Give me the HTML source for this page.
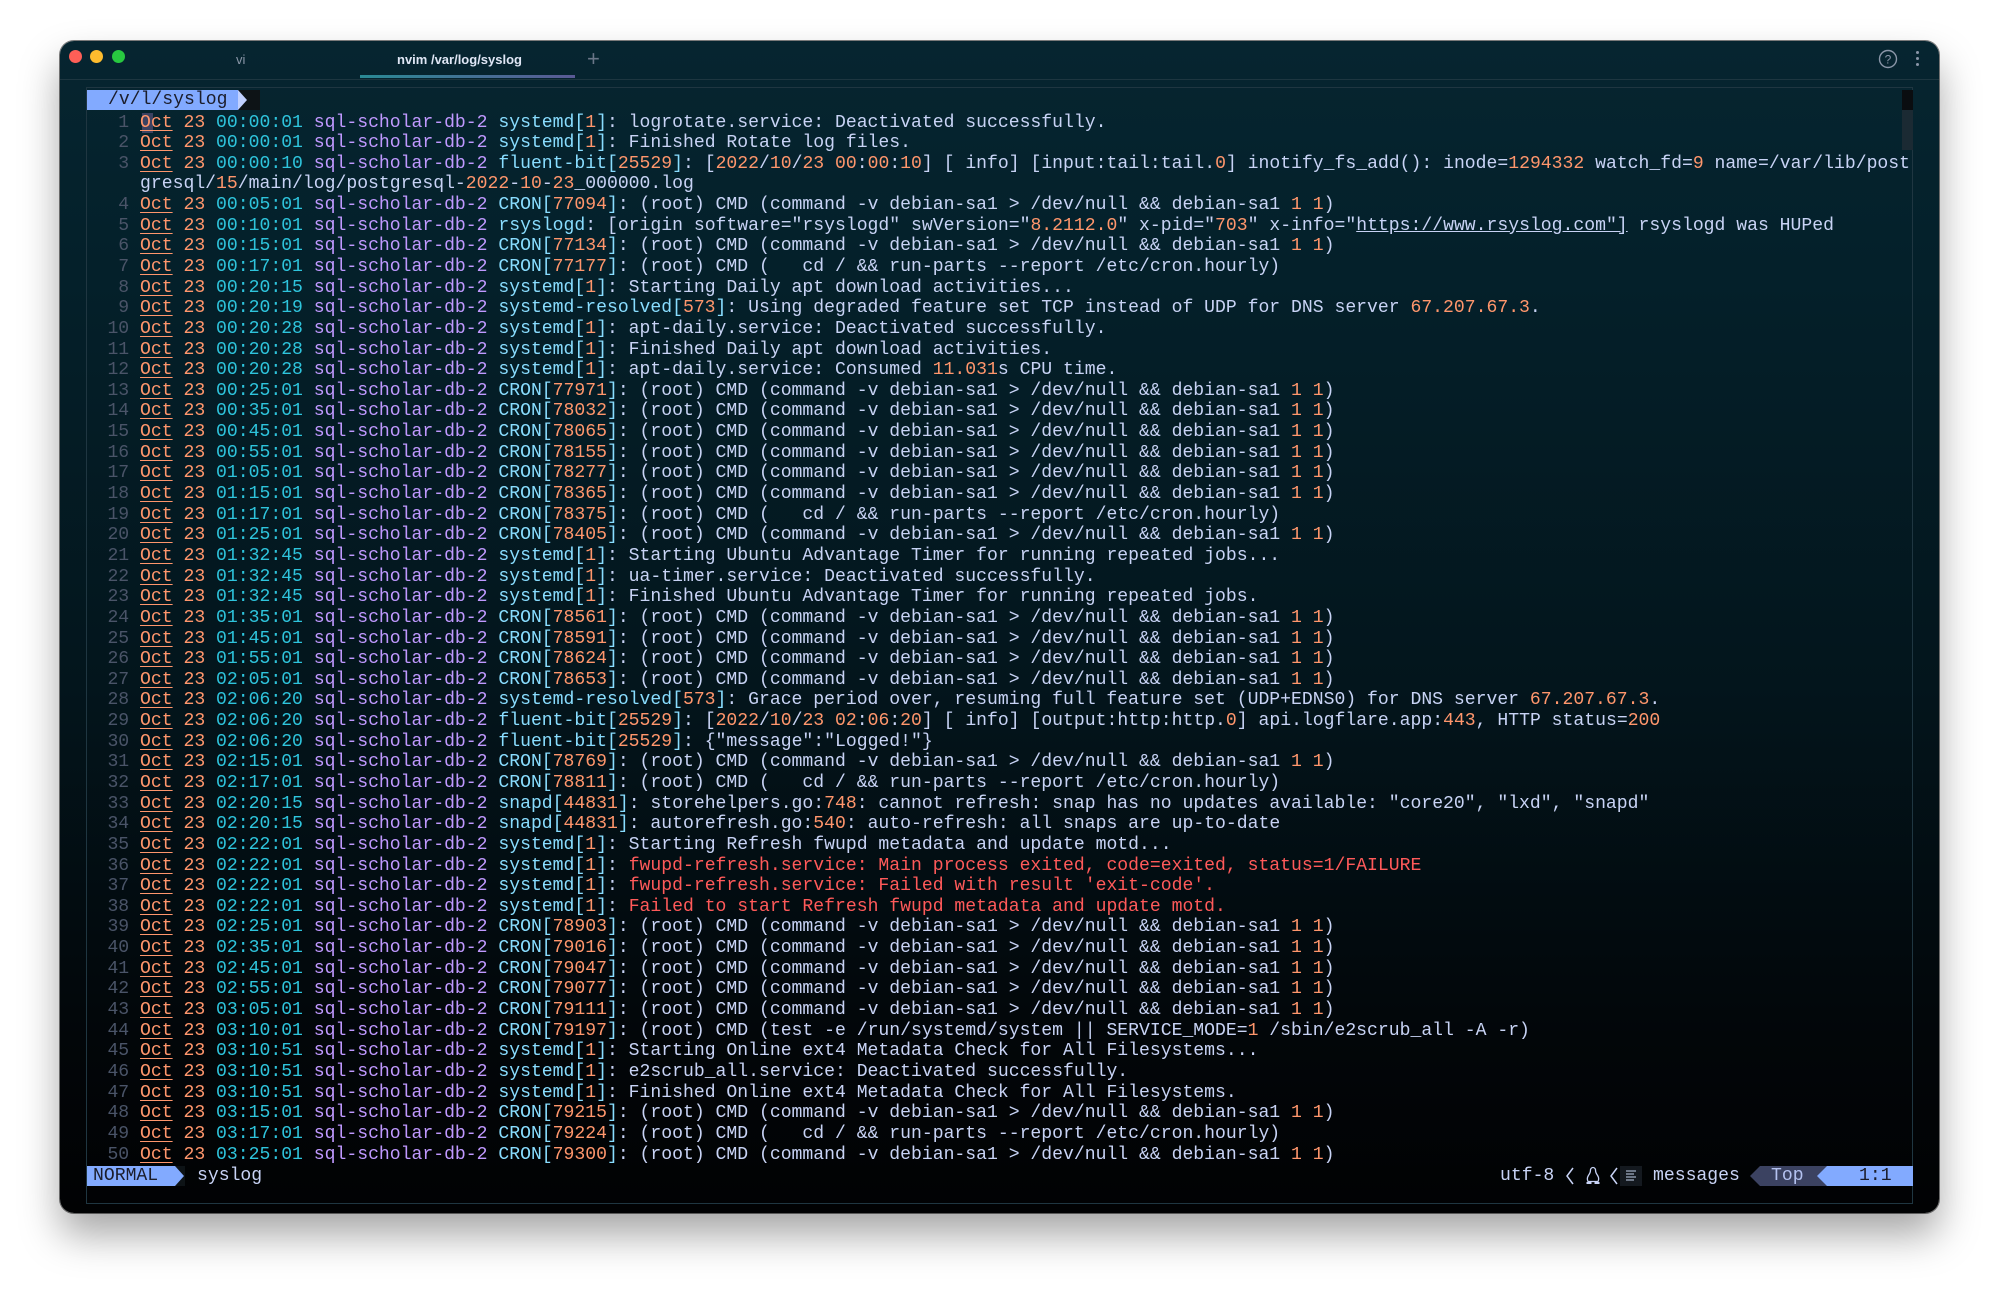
<!DOCTYPE html>
<html><head><meta charset="utf-8"><style>
html,body{margin:0;padding:0;width:2000px;height:1295px;background:#fff;overflow:hidden}
.win{position:absolute;left:60px;top:41px;width:1879px;height:1172px;border-radius:14px;
background:linear-gradient(180deg,#062530 0%,#04202a 20%,#03151c 55%,#020609 85%,#010203 100%);
box-shadow:0 22px 40px rgba(0,0,0,.35),0 0 0 1px rgba(0,0,0,.5);overflow:hidden}
.tl{position:absolute;top:9px;width:13px;height:13px;border-radius:50%}
.title{position:absolute;left:0;top:0;width:100%;height:38px;border-bottom:1px solid #1d3640;font-family:"Liberation Sans",sans-serif;font-size:13px;color:#c8d3f5}
.pane{position:absolute;left:26px;top:46px;width:1827px;height:1117px;border:1px solid #1f3641;box-sizing:border-box}
pre{position:absolute;left:36.6px;top:71.5px;margin:0;font-family:"Liberation Mono",monospace;font-size:18.1px;line-height:20.64px;color:#c8d3f5;white-space:pre}
n{color:#4a5468}u{color:#ff966c;text-decoration:underline;text-underline-offset:3px}
o{color:#ff966c}t{color:#2ec4dc}h{color:#c099ff}k{color:#89ddff}r{color:#ff5a5a}
.st{position:absolute;font-family:"Liberation Mono",monospace;font-size:18.1px;line-height:20.64px;color:#c8d3f5;white-space:pre}
</style></head><body>
<div class="win">
 <div class="title">
  <div class="tl" style="left:9px;background:#fe5f57"></div>
  <div class="tl" style="left:30px;background:#febc2e"></div>
  <div class="tl" style="left:52px;background:#28c840"></div>
  <div style="position:absolute;left:176px;top:11px;color:#8a96a8">vi</div>
  <div style="position:absolute;left:337px;top:11px;font-weight:bold;color:#dfe6f5">nvim /var/log/syslog</div>
  <div style="position:absolute;left:300px;top:34px;width:215px;height:3px;background:linear-gradient(90deg,#2a8a95,#5a5a95)"></div>
  <div style="position:absolute;left:527px;top:5px;font-size:22px;color:#6a7688">+</div>
  <svg style="position:absolute;left:1818px;top:8px" width="20" height="20" viewBox="0 0 20 20"><circle cx="10" cy="10" r="8.5" fill="none" stroke="#8a96a8" stroke-width="1.4"/><text x="10" y="14.5" text-anchor="middle" font-family="Liberation Sans" font-size="12" fill="#8a96a8">?</text></svg>
  <div style="position:absolute;left:1856px;top:10px;width:3px;height:3px;background:#8a96a8;border-radius:50%;box-shadow:0 6px 0 #8a96a8,0 12px 0 #8a96a8"></div>
 </div>
 <div class="pane"></div>
 <div style="position:absolute;left:1842px;top:49px;width:11px;height:20px;background:#0a0d10"></div>
 <div style="position:absolute;left:1842px;top:69px;width:11px;height:40px;background:#1b2a33"></div>
 <div style="position:absolute;left:27px;top:49px;width:151px;height:20px;background:#82aaff"></div>
 <div style="position:absolute;left:178px;top:49px;width:22px;height:20px;background:#0d1316"></div>
 <div style="position:absolute;left:178px;top:49px;width:0;height:0;border-left:9px solid #c0d0ff;border-top:10px solid transparent;border-bottom:10px solid transparent"></div>
 <div class="st" style="left:48px;top:49px;color:#1b1d2b">/v/l/syslog</div>
 <div style="position:absolute;left:82px;top:72px;width:11px;height:20px;background:#3b4261"></div>
<pre><n>  1 </n><u>Oct</u> <o>23</o> <t>00:00:01</t> <h>sql-scholar-db-2</h> <k>systemd[</k><o>1</o><k>]</k>: logrotate.service: Deactivated successfully.
<n>  2 </n><u>Oct</u> <o>23</o> <t>00:00:01</t> <h>sql-scholar-db-2</h> <k>systemd[</k><o>1</o><k>]</k>: Finished Rotate log files.
<n>  3 </n><u>Oct</u> <o>23</o> <t>00:00:10</t> <h>sql-scholar-db-2</h> <k>fluent-bit[</k><o>25529</o><k>]</k>: [<o>2022</o>/<o>10</o>/<o>23</o> <o>00</o>:<o>00</o>:<o>10</o>] [ info] [input:tail:tail.<o>0</o>] inotify_fs_add(): inode=<o>1294332</o> watch_fd=<o>9</o> name=/var/lib/post
    gresql/<o>15</o>/main/log/postgresql-<o>2022</o>-<o>10</o>-<o>23</o>_000000.log
<n>  4 </n><u>Oct</u> <o>23</o> <t>00:05:01</t> <h>sql-scholar-db-2</h> <k>CRON[</k><o>77094</o><k>]</k>: (root) CMD (command -v debian-sa1 &gt; /dev/null &amp;&amp; debian-sa1 <o>1 1</o>)
<n>  5 </n><u>Oct</u> <o>23</o> <t>00:10:01</t> <h>sql-scholar-db-2</h> <k>rsyslogd</k>: [origin software="rsyslogd" swVersion="<o>8.2112.0</o>" x-pid="<o>703</o>" x-info="<span style="text-decoration:underline">https://www.rsyslog.com"]</span> rsyslogd was HUPed
<n>  6 </n><u>Oct</u> <o>23</o> <t>00:15:01</t> <h>sql-scholar-db-2</h> <k>CRON[</k><o>77134</o><k>]</k>: (root) CMD (command -v debian-sa1 &gt; /dev/null &amp;&amp; debian-sa1 <o>1 1</o>)
<n>  7 </n><u>Oct</u> <o>23</o> <t>00:17:01</t> <h>sql-scholar-db-2</h> <k>CRON[</k><o>77177</o><k>]</k>: (root) CMD (   cd / &amp;&amp; run-parts --report /etc/cron.hourly)
<n>  8 </n><u>Oct</u> <o>23</o> <t>00:20:15</t> <h>sql-scholar-db-2</h> <k>systemd[</k><o>1</o><k>]</k>: Starting Daily apt download activities...
<n>  9 </n><u>Oct</u> <o>23</o> <t>00:20:19</t> <h>sql-scholar-db-2</h> <k>systemd-resolved[</k><o>573</o><k>]</k>: Using degraded feature set TCP instead of UDP for DNS server <o>67.207.67.3</o>.
<n> 10 </n><u>Oct</u> <o>23</o> <t>00:20:28</t> <h>sql-scholar-db-2</h> <k>systemd[</k><o>1</o><k>]</k>: apt-daily.service: Deactivated successfully.
<n> 11 </n><u>Oct</u> <o>23</o> <t>00:20:28</t> <h>sql-scholar-db-2</h> <k>systemd[</k><o>1</o><k>]</k>: Finished Daily apt download activities.
<n> 12 </n><u>Oct</u> <o>23</o> <t>00:20:28</t> <h>sql-scholar-db-2</h> <k>systemd[</k><o>1</o><k>]</k>: apt-daily.service: Consumed <o>11.031</o>s CPU time.
<n> 13 </n><u>Oct</u> <o>23</o> <t>00:25:01</t> <h>sql-scholar-db-2</h> <k>CRON[</k><o>77971</o><k>]</k>: (root) CMD (command -v debian-sa1 &gt; /dev/null &amp;&amp; debian-sa1 <o>1 1</o>)
<n> 14 </n><u>Oct</u> <o>23</o> <t>00:35:01</t> <h>sql-scholar-db-2</h> <k>CRON[</k><o>78032</o><k>]</k>: (root) CMD (command -v debian-sa1 &gt; /dev/null &amp;&amp; debian-sa1 <o>1 1</o>)
<n> 15 </n><u>Oct</u> <o>23</o> <t>00:45:01</t> <h>sql-scholar-db-2</h> <k>CRON[</k><o>78065</o><k>]</k>: (root) CMD (command -v debian-sa1 &gt; /dev/null &amp;&amp; debian-sa1 <o>1 1</o>)
<n> 16 </n><u>Oct</u> <o>23</o> <t>00:55:01</t> <h>sql-scholar-db-2</h> <k>CRON[</k><o>78155</o><k>]</k>: (root) CMD (command -v debian-sa1 &gt; /dev/null &amp;&amp; debian-sa1 <o>1 1</o>)
<n> 17 </n><u>Oct</u> <o>23</o> <t>01:05:01</t> <h>sql-scholar-db-2</h> <k>CRON[</k><o>78277</o><k>]</k>: (root) CMD (command -v debian-sa1 &gt; /dev/null &amp;&amp; debian-sa1 <o>1 1</o>)
<n> 18 </n><u>Oct</u> <o>23</o> <t>01:15:01</t> <h>sql-scholar-db-2</h> <k>CRON[</k><o>78365</o><k>]</k>: (root) CMD (command -v debian-sa1 &gt; /dev/null &amp;&amp; debian-sa1 <o>1 1</o>)
<n> 19 </n><u>Oct</u> <o>23</o> <t>01:17:01</t> <h>sql-scholar-db-2</h> <k>CRON[</k><o>78375</o><k>]</k>: (root) CMD (   cd / &amp;&amp; run-parts --report /etc/cron.hourly)
<n> 20 </n><u>Oct</u> <o>23</o> <t>01:25:01</t> <h>sql-scholar-db-2</h> <k>CRON[</k><o>78405</o><k>]</k>: (root) CMD (command -v debian-sa1 &gt; /dev/null &amp;&amp; debian-sa1 <o>1 1</o>)
<n> 21 </n><u>Oct</u> <o>23</o> <t>01:32:45</t> <h>sql-scholar-db-2</h> <k>systemd[</k><o>1</o><k>]</k>: Starting Ubuntu Advantage Timer for running repeated jobs...
<n> 22 </n><u>Oct</u> <o>23</o> <t>01:32:45</t> <h>sql-scholar-db-2</h> <k>systemd[</k><o>1</o><k>]</k>: ua-timer.service: Deactivated successfully.
<n> 23 </n><u>Oct</u> <o>23</o> <t>01:32:45</t> <h>sql-scholar-db-2</h> <k>systemd[</k><o>1</o><k>]</k>: Finished Ubuntu Advantage Timer for running repeated jobs.
<n> 24 </n><u>Oct</u> <o>23</o> <t>01:35:01</t> <h>sql-scholar-db-2</h> <k>CRON[</k><o>78561</o><k>]</k>: (root) CMD (command -v debian-sa1 &gt; /dev/null &amp;&amp; debian-sa1 <o>1 1</o>)
<n> 25 </n><u>Oct</u> <o>23</o> <t>01:45:01</t> <h>sql-scholar-db-2</h> <k>CRON[</k><o>78591</o><k>]</k>: (root) CMD (command -v debian-sa1 &gt; /dev/null &amp;&amp; debian-sa1 <o>1 1</o>)
<n> 26 </n><u>Oct</u> <o>23</o> <t>01:55:01</t> <h>sql-scholar-db-2</h> <k>CRON[</k><o>78624</o><k>]</k>: (root) CMD (command -v debian-sa1 &gt; /dev/null &amp;&amp; debian-sa1 <o>1 1</o>)
<n> 27 </n><u>Oct</u> <o>23</o> <t>02:05:01</t> <h>sql-scholar-db-2</h> <k>CRON[</k><o>78653</o><k>]</k>: (root) CMD (command -v debian-sa1 &gt; /dev/null &amp;&amp; debian-sa1 <o>1 1</o>)
<n> 28 </n><u>Oct</u> <o>23</o> <t>02:06:20</t> <h>sql-scholar-db-2</h> <k>systemd-resolved[</k><o>573</o><k>]</k>: Grace period over, resuming full feature set (UDP+EDNS0) for DNS server <o>67.207.67.3</o>.
<n> 29 </n><u>Oct</u> <o>23</o> <t>02:06:20</t> <h>sql-scholar-db-2</h> <k>fluent-bit[</k><o>25529</o><k>]</k>: [<o>2022</o>/<o>10</o>/<o>23</o> <o>02</o>:<o>06</o>:<o>20</o>] [ info] [output:http:http.<o>0</o>] api.logflare.app:<o>443</o>, HTTP status=<o>200</o>
<n> 30 </n><u>Oct</u> <o>23</o> <t>02:06:20</t> <h>sql-scholar-db-2</h> <k>fluent-bit[</k><o>25529</o><k>]</k>: {"message":"Logged!"}
<n> 31 </n><u>Oct</u> <o>23</o> <t>02:15:01</t> <h>sql-scholar-db-2</h> <k>CRON[</k><o>78769</o><k>]</k>: (root) CMD (command -v debian-sa1 &gt; /dev/null &amp;&amp; debian-sa1 <o>1 1</o>)
<n> 32 </n><u>Oct</u> <o>23</o> <t>02:17:01</t> <h>sql-scholar-db-2</h> <k>CRON[</k><o>78811</o><k>]</k>: (root) CMD (   cd / &amp;&amp; run-parts --report /etc/cron.hourly)
<n> 33 </n><u>Oct</u> <o>23</o> <t>02:20:15</t> <h>sql-scholar-db-2</h> <k>snapd[</k><o>44831</o><k>]</k>: storehelpers.go:<o>748</o>: cannot refresh: snap has no updates available: "core20", "lxd", "snapd"
<n> 34 </n><u>Oct</u> <o>23</o> <t>02:20:15</t> <h>sql-scholar-db-2</h> <k>snapd[</k><o>44831</o><k>]</k>: autorefresh.go:<o>540</o>: auto-refresh: all snaps are up-to-date
<n> 35 </n><u>Oct</u> <o>23</o> <t>02:22:01</t> <h>sql-scholar-db-2</h> <k>systemd[</k><o>1</o><k>]</k>: Starting Refresh fwupd metadata and update motd...
<n> 36 </n><u>Oct</u> <o>23</o> <t>02:22:01</t> <h>sql-scholar-db-2</h> <k>systemd[</k><o>1</o><k>]</k>: <r>fwupd-refresh.service: Main process exited, code=exited, status=1/FAILURE</r>
<n> 37 </n><u>Oct</u> <o>23</o> <t>02:22:01</t> <h>sql-scholar-db-2</h> <k>systemd[</k><o>1</o><k>]</k>: <r>fwupd-refresh.service: Failed with result 'exit-code'.</r>
<n> 38 </n><u>Oct</u> <o>23</o> <t>02:22:01</t> <h>sql-scholar-db-2</h> <k>systemd[</k><o>1</o><k>]</k>: <r>Failed to start Refresh fwupd metadata and update motd.</r>
<n> 39 </n><u>Oct</u> <o>23</o> <t>02:25:01</t> <h>sql-scholar-db-2</h> <k>CRON[</k><o>78903</o><k>]</k>: (root) CMD (command -v debian-sa1 &gt; /dev/null &amp;&amp; debian-sa1 <o>1 1</o>)
<n> 40 </n><u>Oct</u> <o>23</o> <t>02:35:01</t> <h>sql-scholar-db-2</h> <k>CRON[</k><o>79016</o><k>]</k>: (root) CMD (command -v debian-sa1 &gt; /dev/null &amp;&amp; debian-sa1 <o>1 1</o>)
<n> 41 </n><u>Oct</u> <o>23</o> <t>02:45:01</t> <h>sql-scholar-db-2</h> <k>CRON[</k><o>79047</o><k>]</k>: (root) CMD (command -v debian-sa1 &gt; /dev/null &amp;&amp; debian-sa1 <o>1 1</o>)
<n> 42 </n><u>Oct</u> <o>23</o> <t>02:55:01</t> <h>sql-scholar-db-2</h> <k>CRON[</k><o>79077</o><k>]</k>: (root) CMD (command -v debian-sa1 &gt; /dev/null &amp;&amp; debian-sa1 <o>1 1</o>)
<n> 43 </n><u>Oct</u> <o>23</o> <t>03:05:01</t> <h>sql-scholar-db-2</h> <k>CRON[</k><o>79111</o><k>]</k>: (root) CMD (command -v debian-sa1 &gt; /dev/null &amp;&amp; debian-sa1 <o>1 1</o>)
<n> 44 </n><u>Oct</u> <o>23</o> <t>03:10:01</t> <h>sql-scholar-db-2</h> <k>CRON[</k><o>79197</o><k>]</k>: (root) CMD (test -e /run/systemd/system || SERVICE_MODE=<o>1</o> /sbin/e2scrub_all -A -r)
<n> 45 </n><u>Oct</u> <o>23</o> <t>03:10:51</t> <h>sql-scholar-db-2</h> <k>systemd[</k><o>1</o><k>]</k>: Starting Online ext4 Metadata Check for All Filesystems...
<n> 46 </n><u>Oct</u> <o>23</o> <t>03:10:51</t> <h>sql-scholar-db-2</h> <k>systemd[</k><o>1</o><k>]</k>: e2scrub_all.service: Deactivated successfully.
<n> 47 </n><u>Oct</u> <o>23</o> <t>03:10:51</t> <h>sql-scholar-db-2</h> <k>systemd[</k><o>1</o><k>]</k>: Finished Online ext4 Metadata Check for All Filesystems.
<n> 48 </n><u>Oct</u> <o>23</o> <t>03:15:01</t> <h>sql-scholar-db-2</h> <k>CRON[</k><o>79215</o><k>]</k>: (root) CMD (command -v debian-sa1 &gt; /dev/null &amp;&amp; debian-sa1 <o>1 1</o>)
<n> 49 </n><u>Oct</u> <o>23</o> <t>03:17:01</t> <h>sql-scholar-db-2</h> <k>CRON[</k><o>79224</o><k>]</k>: (root) CMD (   cd / &amp;&amp; run-parts --report /etc/cron.hourly)
<n> 50 </n><u>Oct</u> <o>23</o> <t>03:25:01</t> <h>sql-scholar-db-2</h> <k>CRON[</k><o>79300</o><k>]</k>: (root) CMD (command -v debian-sa1 &gt; /dev/null &amp;&amp; debian-sa1 <o>1 1</o>)</pre>
 <!-- statusline -->
 <div style="position:absolute;left:27px;top:1125px;width:88px;height:20px;background:#82aaff"></div>
 <div style="position:absolute;left:115px;top:1125px;width:10px;height:20px;background:#0d1316"></div>
 <div style="position:absolute;left:115px;top:1125px;width:0;height:0;border-left:9px solid #82aaff;border-top:10px solid transparent;border-bottom:10px solid transparent"></div>
 <div class="st" style="left:33px;top:1125px;color:#1b1d2b">NORMAL</div>
 <div class="st" style="left:137px;top:1125px">syslog</div>
 <div class="st" style="left:1440px;top:1125px">utf-8</div>
 <svg style="position:absolute;left:1505px;top:1126px" width="10" height="18" viewBox="0 0 10 18"><polyline points="8,1 2,9 8,17" fill="none" stroke="#c8d3f5" stroke-width="1.5"/></svg>
 <svg style="position:absolute;left:1525px;top:1125px" width="16" height="19" viewBox="0 0 16 19"><path d="M8 1.5c-1.8 0-2.6 1.6-2.6 3.4 0 1.8-.8 2.8-2 4.6C2.2 11.5 2 13.6 3 15.5h10c1-1.9.8-4-.4-6-1.2-1.8-2-2.8-2-4.6 0-1.8-.8-3.4-2.6-3.4z" fill="none" stroke="#c8d3f5" stroke-width="1.3"/><path d="M1.5 17h5M9.5 17h5" stroke="#c8d3f5" stroke-width="2"/></svg>
 <svg style="position:absolute;left:1549px;top:1126px" width="10" height="18" viewBox="0 0 10 18"><polyline points="8,1 2,9 8,17" fill="none" stroke="#c8d3f5" stroke-width="1.5"/></svg>
 <div style="position:absolute;left:1560px;top:1125px;width:22px;height:20px;background:#14191f"></div>
 <svg style="position:absolute;left:1565px;top:1128px" width="12" height="14" viewBox="0 0 12 14"><path d="M1 2h10M1 5h8M1 8h10M1 11h8" stroke="#8a96a8" stroke-width="1.4"/></svg>
 <div class="st" style="left:1593px;top:1125px">messages</div>
 <div style="position:absolute;left:1700px;top:1125px;width:67px;height:20px;background:#3b4261"></div>
 <div style="position:absolute;left:1690px;top:1125px;width:0;height:0;border-right:10px solid #3b4261;border-top:10px solid transparent;border-bottom:10px solid transparent"></div>
 <div class="st" style="left:1711px;top:1125px;color:#b4c2f0">Top</div>
 <div style="position:absolute;left:1767px;top:1125px;width:86px;height:20px;background:#82aaff"></div>
 <div style="position:absolute;left:1757px;top:1125px;width:0;height:0;border-right:10px solid #82aaff;border-top:10px solid transparent;border-bottom:10px solid transparent"></div>
 <div class="st" style="left:1799px;top:1125px;color:#1b1d2b">1:1</div>
</div>
</body></html>
